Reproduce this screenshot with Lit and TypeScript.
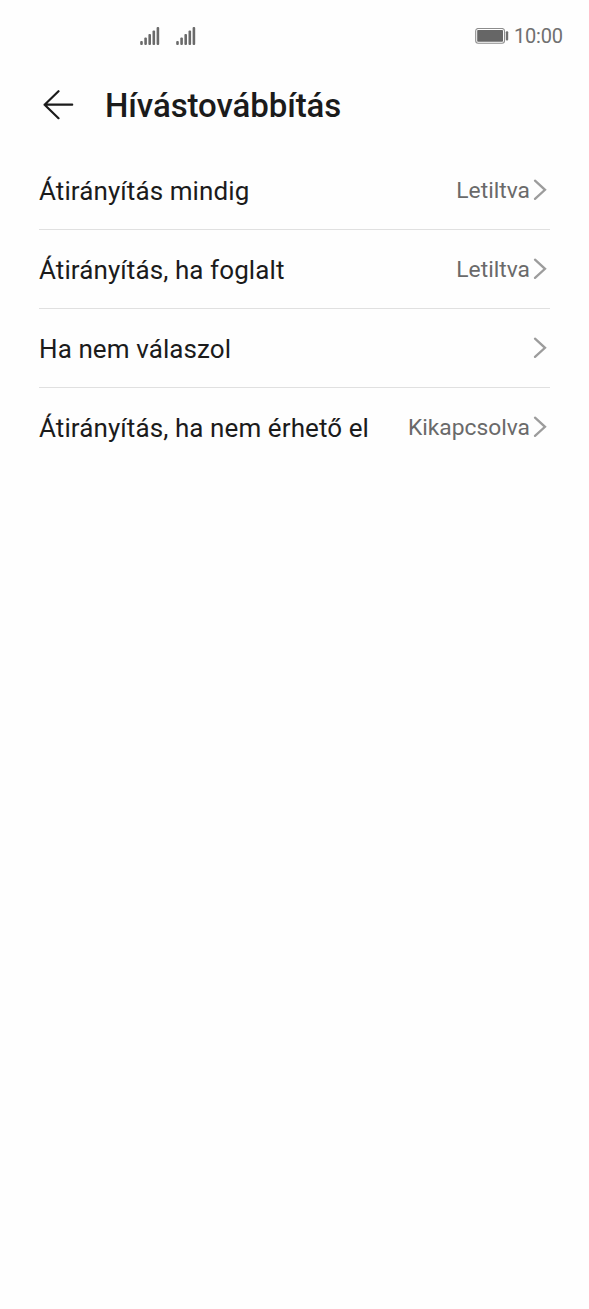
import { LitElement, html, css, svg, nothing } from 'lit';
import { customElement, property } from 'lit/decorators.js';

interface ForwardingOption {
  label: string;
  status?: string;
}

const OPTIONS: ForwardingOption[] = [
  { label: 'Átirányítás mindig', status: 'Letiltva' },
  { label: 'Átirányítás, ha foglalt', status: 'Letiltva' },
  { label: 'Ha nem válaszol' },
  { label: 'Átirányítás, ha nem érhető el', status: 'Kikapcsolva' },
];

// Height of each signal bar, left to right
const SIGNAL_BARS = [4, 7.5, 11, 14.5, 18];

@customElement('status-bar')
export class StatusBar extends LitElement {
  static styles = css`
    :host {
      display: flex;
      align-items: center;
      height: 72px;
      box-sizing: border-box;
      padding: 0 27px 0 140px;
      color: #707070;
    }

    svg {
      display: block;
      flex: none;
    }

    .signals {
      display: flex;
      gap: 15.5px;
      flex: 1;
      padding-bottom: 1px;
    }

    .battery {
      margin-right: 5px;
    }

    .clock {
      width: 48px;
      font-size: 20px;
      letter-spacing: -0.2px;
      line-height: 24px;
    }
  `;

  private _renderSignal() {
    return html`
      <svg width="20" height="18" viewBox="0 0 20 18" fill="#6a6a6a">
        ${SIGNAL_BARS.map(
          (h, i) => svg`
            <rect x=${0.2 + i * 4.1} y=${18 - h} width="2.6" height=${h} rx="1" />
          `
        )}
      </svg>
    `;
  }

  render() {
    return html`
      <div class="signals">${this._renderSignal()} ${this._renderSignal()}</div>
      <svg class="battery" width="34" height="16" viewBox="0 0 34 16">
        <rect
          x="0.7"
          y="0.5"
          width="28.8"
          height="14.8"
          rx="2.5"
          fill="none"
          stroke="#8c8c8c"
          stroke-width="1.1"
        />
        <rect x="2.2" y="2" width="25.8" height="11.8" rx="0.8" fill="#666666" />
        <rect x="30.8" y="3.2" width="2.4" height="9.2" rx="1" fill="#707070" />
      </svg>
      <span class="clock">10:00</span>
    `;
  }
}

@customElement('option-row')
export class OptionRow extends LitElement {
  @property() label = '';
  @property() status = '';

  static styles = css`
    :host {
      display: flex;
      align-items: center;
      height: 78px;
    }

    .label {
      flex: 1;
      font-size: 26px;
      letter-spacing: 0.09px;
      line-height: 32px;
      padding-top: 1px;
      color: #1b1b1b;
      white-space: nowrap;
    }

    .status {
      font-size: 22.8px;
      line-height: 28px;
      padding-top: 1px;
      color: #6a6a6a;
    }

    .chevron {
      display: block;
      flex: none;
      margin: 0 3px 1px 3px;
    }
  `;

  render() {
    return html`
      <span class="label">${this.label}</span>
      ${this.status
        ? html`<span class="status">${this.status}</span>`
        : nothing}
      <svg class="chevron" width="14" height="22" viewBox="0 0 14 22">
        <path
          d="M2 1.7 L12 10.8 L2 19.9"
          fill="none"
          stroke="#9c9c9c"
          stroke-width="2.3"
          stroke-linecap="round"
        />
      </svg>
    `;
  }
}

@customElement('app-root')
export class AppRoot extends LitElement {
  static styles = css`
    :host {
      display: block;
      min-height: 100vh;
      background: #fefefe;
      font-family: Roboto, sans-serif;
    }

    .header {
      display: flex;
      align-items: center;
      height: 79px;
      box-sizing: border-box;
      padding: 0 43px 13px;
      gap: 31px;
    }

    .back {
      display: block;
      flex: none;
    }

    .title {
      margin: 0;
      padding-top: 2px;
      font-size: 33px;
      font-weight: 500;
      letter-spacing: -0.08px;
      line-height: 40px;
      color: #1b1b1b;
    }

    .options {
      padding: 0 39px;
    }

    option-row + option-row {
      border-top: 1px solid #e0e0e0;
    }
  `;

  render() {
    return html`
      <status-bar></status-bar>
      <div class="header">
        <svg class="back" width="31" height="30" viewBox="0 0 31 30">
          <path
            d="M15.5 1.2 L1.6 14.7 L15.5 28.2 M1.6 14.7 H29.2"
            fill="none"
            stroke="#1b1b1b"
            stroke-width="2.2"
            stroke-linecap="round"
            stroke-linejoin="round"
          />
        </svg>
        <h1 class="title">Hívástovábbítás</h1>
      </div>
      <div class="options">
        ${OPTIONS.map(
          (option) => html`
            <option-row
              .label=${option.label}
              .status=${option.status ?? ''}
            ></option-row>
          `
        )}
      </div>
    `;
  }
}
